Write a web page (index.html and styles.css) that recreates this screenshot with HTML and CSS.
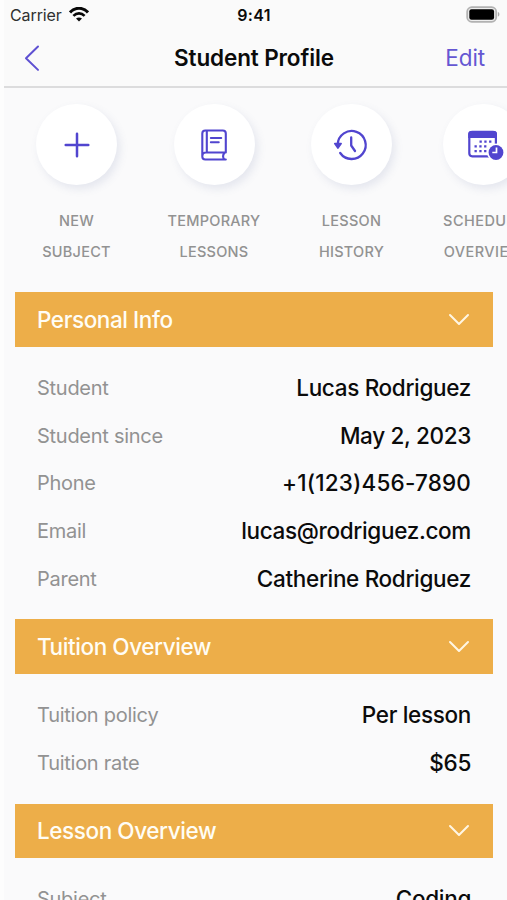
FILE: index.html
```html
<!DOCTYPE html>
<html lang="en">
<head>
<meta charset="utf-8">
<title>Student Profile</title>
<link rel="stylesheet" href="styles.css">
</head>
<body>
<div class="screen">
  <header class="top">
    <div class="status">
      <div class="carrier"><span>Carrier</span>
        <svg class="wifi" width="20" height="15" viewBox="0 0 20 15" fill="none" stroke="#080808"><path d="M1 5.4C6-.1 14-.1 19 5.4" stroke-width="3"/><path d="M4.4 8.8C7.7 5.5 12.3 5.5 15.6 8.8" stroke-width="2.6"/><path d="M10 14.5 7 11.6Q10 9.2 13 11.6Z" fill="#080808" stroke="none"/></svg>
      </div>
      <time class="time">9:41</time>
      <svg class="battery" width="34" height="17" viewBox="0 0 34 17"><rect x="1.2" y="1.2" width="29" height="14.600" rx="4.600" fill="#eee" stroke="#b2b2b2" stroke-width="1.8"/><rect x="3.300" y="3.200" width="24.800" height="10.600" rx="2.200"/><path d="M31.900 6c2 .7 2 3.900 0 4.600Z" fill="#aaa"/></svg>
    </div>
    <nav class="nav">
      <svg class="back" width="18" height="28" viewBox="0 0 18 28"><path d="M16 2.500 4 14.200 16 25.900" fill="none" stroke="#5e50d2" stroke-width="2" stroke-linecap="round" stroke-linejoin="round"/></svg>
      <h1>Student Profile</h1>
      <a class="edit">Edit</a>
    </nav>
  </header>

  <div class="actions">
    <div class="action"><div class="disc"><svg width="42" height="42" viewBox="0 0 42 42"><path d="M21 9.700v22.600M9.700 21h22.600" stroke="#5145cf" stroke-width="2.500" stroke-linecap="round"/></svg></div><p>NEW<br>SUBJECT</p></div>
    <div class="action"><div class="disc"><svg width="42" height="42" viewBox="-0.800 0.500 42 42" fill="none" stroke="#5145cf" stroke-width="2.100" stroke-linecap="round" stroke-linejoin="round"><path d="M32 36H11.500a3 3 0 0 1-3-3V10a3 3 0 0 1 3-3H29a3 3 0 0 1 3 3V29H12a3.500 3.500 0 0 0-3.500 3.500M13 7v22M30.500 29.500c-1.500 2-1.500 4.500 0 6.500"/><path d="M17 14.500h10.500M17 18.800h8" stroke-width="1.900"/></svg></div><p>TEMPORARY<br>LESSONS</p></div>
    <div class="action"><div class="disc"><svg width="42" height="42" viewBox="0.800 0 42 42" fill="none" stroke="#5145cf" stroke-width="2.300" stroke-linecap="round" stroke-linejoin="round"><path d="M7.500 20.500A14 14 0 1 1 10 29"/><path d="M4.500 19.500h6.500L7.800 24.200Z" fill="#5145cf" stroke-width="1.500"/><path d="M21 13.500v8l3.800 5.500"/></svg></div><p>LESSON<br>HISTORY</p></div>
    <div class="action action-last"><div class="disc"><svg width="42" height="42" viewBox="0 0 42 42"><rect x="7.300" y="7.800" width="26.600" height="24.500" rx="3" fill="none" stroke="#5145cf" stroke-width="2.200"/><path d="M6.200 14v-4a3 3 0 0 1 3-3h22.800a3 3 0 0 1 3 3v4Z" fill="#5145cf"/><path d="M17.500 17.700h12M12.500 22.400h12M12.500 27.100h12" stroke="#5145cf" stroke-width="2.300" stroke-dasharray="2.300 2.500"/><circle cx="34" cy="28.500" r="9" fill="#fff"/><circle cx="34" cy="28.500" r="7.400" fill="#5145cf"/><path d="M34.500 23.500v5h-4.200" fill="none" stroke="#fff" stroke-width="1.700"/></svg></div><p>SCHEDULE<br>OVERVIEW</p></div>
  </div>

  <main>
    <section>
      <h2>Personal Info<svg width="22" height="14" viewBox="0 0 22 14"><path d="m2 2 9 9 9-9"/></svg></h2>
      <dl>
        <div><dt>Student</dt><dd>Lucas Rodriguez</dd></div>
        <div><dt>Student since</dt><dd>May 2, 2023</dd></div>
        <div><dt>Phone</dt><dd class="phone">+1(123)456-7890</dd></div>
        <div><dt>Email</dt><dd>lucas@rodriguez.com</dd></div>
        <div><dt>Parent</dt><dd>Catherine Rodriguez</dd></div>
      </dl>
    </section>
    <section>
      <h2>Tuition Overview<svg width="22" height="14" viewBox="0 0 22 14"><path d="m2 2 9 9 9-9"/></svg></h2>
      <dl>
        <div><dt>Tuition policy</dt><dd>Per lesson</dd></div>
        <div><dt>Tuition rate</dt><dd>$65</dd></div>
      </dl>
    </section>
    <section>
      <h2>Lesson Overview<svg width="22" height="14" viewBox="0 0 22 14"><path d="m2 2 9 9 9-9"/></svg></h2>
      <dl>
        <div><dt>Subject</dt><dd>Coding</dd></div>
      </dl>
    </section>
  </main>
</div>
</body>
</html>
```
FILE: styles.css
```css
* { box-sizing: border-box; margin: 0; }
html, body { height: 900px; overflow: hidden; }
body { font-family: Inter, "Liberation Sans", sans-serif; color: #0b0b0b; background: #fafafb; }
.screen { width: 507px; height: 900px; overflow: hidden; border-left: 4px solid #fdfdfd; }
.top { height: 88px; margin-left: -4px; border-bottom: 2px solid #dcdcdd; background: #fafafa; }
.status { height: 29px; display: grid; grid-template-columns: 1fr auto 1fr; align-items: center; padding: 0 7px 0 10px; }
.carrier { display: flex; align-items: center; gap: 7px; font-size: 16px; letter-spacing: -0.1px; color: #303030; }
.wifi { display: block; }
.time { font-size: 16px; font-weight: 600; letter-spacing: 0.3px; margin-right: 2px; }
.battery { justify-self: end; }
.nav { height: 57px; display: grid; grid-template-columns: 1fr auto 1fr; align-items: center; padding: 0 22px; }
h1 { font-size: 22.5px; font-weight: 600; letter-spacing: -0.12px; margin-left: 1px; }
.edit { justify-self: end; font-size: 22.5px; letter-spacing: -0.1px; color: #6557d2; }
.actions { display: flex; gap: 17.500px; height: 204px; padding: 16px 0 0 12.500px; }
.action { flex: 0 0 120px; display: flex; flex-direction: column; align-items: center; }
.action-last { margin-left: -6px; }
.disc { width: 81px; height: 81px; border-radius: 50%; background: #fff; display: flex; align-items: center; justify-content: center; box-shadow: 3px 4px 9px rgba(100, 110, 160, 0.14); }
.action p { margin-top: 20px; text-align: center; font-size: 14.500px; font-weight: 500; line-height: 31px; letter-spacing: 0.250px; color: #929292; }
.action-last p { letter-spacing: 0.450px; padding-left: 1.500px; }
main { padding: 0 14px 0 11px; }
h2 { height: 54.500px; padding: 0 23px 0 22px; display: flex; align-items: center; justify-content: space-between; background: #edae49; color: #fffdf5; font-size: 22.500px; font-weight: 500; letter-spacing: -0.42px; }
h2 svg { position: relative; top: 0.500px; fill: none; stroke: #fff6e4; stroke-width: 2; stroke-linecap: round; stroke-linejoin: round; }
dl { padding: 17px 22px 17px; }
dl div { height: 47.800px; display: flex; align-items: center; justify-content: space-between; }
dt { padding-top: 1px; font-size: 20px; letter-spacing: -0.270px; color: #929292; }
dd { font-size: 22.500px; font-weight: 500; letter-spacing: -0.330px; }
.phone { letter-spacing: 0.170px; }
```
